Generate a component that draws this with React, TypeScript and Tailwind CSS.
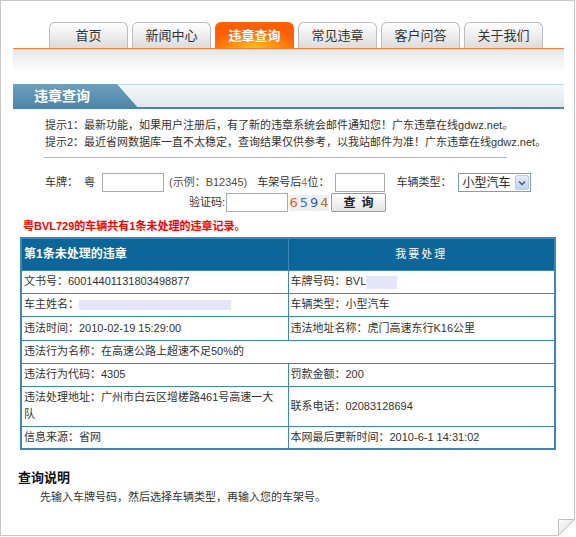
import React from 'react';

const TABS = ['首页', '新闻中心', '违章查询', '常见违章', '客户问答', '关于我们'];
const ACTIVE = '违章查询';

function Tab({ label }: { label: string }) {
  const active = label === ACTIVE;
  return (
    <div
      className={
        active
          ? 'w-[79px] h-[26px] rounded-t-[6px] border border-b-0 border-[#ff6a10] bg-[radial-gradient(ellipse_60%_70%_at_50%_100%,#ffc21c_0%,#ff8a14_55%,#ff5e04_100%)] flex items-center justify-center text-white font-bold text-[13px]'
          : 'w-[79px] h-[26px] rounded-t-[6px] border border-b-0 border-[#bdbdbd] bg-linear-to-b from-white to-[#dcdcdc] flex items-center justify-center text-[#333] text-[13px]'
      }
    >
      {label}
    </div>
  );
}

function Redact({ w, h }: { w: number; h: number }) {
  return <span className="inline-block align-middle bg-[#e6e6fa]" style={{ width: w, height: h }} />;
}

const td = 'border border-[#3b88bb] pl-[2px] align-middle text-[11px] text-[#333] leading-[15px]';

export default function App() {
  return (
    <div className="w-[576px] h-[537px] bg-white relative font-['Liberation_Sans','Noto_Sans_CJK_SC',sans-serif]">
      <div className="w-[575px] h-[536px] border border-[#c8c8c8] overflow-hidden">
        <div className="ml-[12px] w-[551px]">
          {/* nav tabs */}
          <div className="pt-[21px] pl-[36px] flex gap-[4px] items-end">
            {TABS.map((t) => (
              <Tab key={t} label={t} />
            ))}
          </div>
          <div className="h-px bg-[#ff7a30]" />
          <div className="h-[24px] bg-linear-to-b from-[#e6e6e6] to-white" />

          {/* section header */}
          <div className="mt-[11px] h-[25px] relative bg-linear-to-b from-[#f4f7f9] to-[#dfe8ed] border-t border-[#c4dbe7] border-b-2 border-b-[#4d87a7]">
            <div className="absolute left-0 top-[-1px] h-[25px] w-[126px] bg-linear-to-b from-[#6fa0bd] to-[#4c84a6] [clip-path:polygon(0_0,104px_0,126px_100%,0_100%)] flex items-center pl-[21px] text-white font-bold text-[14px]">
              违章查询
            </div>
          </div>

          {/* tips */}
          <div className="mt-[8px] ml-[32px] text-[11px] leading-[17px] text-[#333] whitespace-nowrap">
            <div>提示1：最新功能，如果用户注册后，有了新的违章系统会邮件通知您！广东违章在线gdwz.net。</div>
            <div>提示2：最近省网数据库一直不太稳定，查询结果仅供参考，以我站邮件为准！广东违章在线gdwz.net。</div>
          </div>
          <div className="mt-[6px] ml-[31px] w-[463px] h-px bg-[#b4b4b4]" />

          {/* form */}
          <div className="mt-[15px] h-[19px] flex items-center text-[11px] text-[#333] whitespace-nowrap">
            <span className="ml-[32px]">车牌：</span>
            <span className="ml-[6px]">粤</span>
            <div className="ml-[7px] w-[62px] h-[19px] border border-[#a5acb5] bg-white" />
            <span className="ml-[5px] text-[#5a4a3a]">(示例：B12345)</span>
            <span className="ml-[10px]">
              车架号后<span className="text-[#b8702a]">4</span>位：
            </span>
            <div className="ml-[6px] w-[50px] h-[19px] border border-[#a5acb5] bg-white" />
            <span className="ml-[11px]">车辆类型：</span>
            <div className="ml-[7px] w-[73px] h-[19px] border border-[#7f9db9] bg-white flex items-center">
              <span className="flex-1 pl-[3px] text-[12px] text-[#222]">小型汽车</span>
              <div className="w-[14px] h-[15px] mr-[1px] rounded-[2px] border border-[#b7c9e6] bg-linear-to-b from-[#e5ecfa] to-[#c2d3f2] flex items-center justify-center">
                <svg width="8" height="6" viewBox="0 0 8 6">
                  <path d="M1 1.5 L4 4.5 L7 1.5" fill="none" stroke="#4d6185" strokeWidth="1.6" />
                </svg>
              </div>
            </div>
          </div>
          <div className="mt-[1px] h-[19px] flex items-center text-[11px] text-[#333] whitespace-nowrap">
            <span className="ml-[176px]">验证码:</span>
            <div className="ml-[1px] w-[62px] h-[19px] border border-[#a5acb5] bg-white" />
            <div className="ml-[1px] w-[40px] h-[16px] bg-[#efefef] flex items-center justify-center gap-[2px] text-[13px] font-['DejaVu_Sans',sans-serif]">
              <span className="text-[#e0642e]">6</span>
              <span className="text-[#3a72d4]">5</span>
              <span className="text-[#2a5ac8]">9</span>
              <span className="text-[#b07028]">4</span>
            </div>
            <div className="ml-[2px] w-[55px] h-[19px] border border-[#9a9a9a] rounded-[2px] bg-linear-to-b from-white to-[#e4e4e4] flex items-center justify-center text-[12px] font-bold text-[#222] tracking-[6px] pl-[6px]">
              查询
            </div>
          </div>

          {/* result line */}
          <div className="mt-[6px] ml-[10px] text-[11px] leading-[16px] font-bold text-[#f00] whitespace-nowrap">
            粤BVL729的车辆共有1条未处理的违章记录。
          </div>

          {/* table */}
          <table className="mt-[3px] ml-[7px] w-[536px] border-collapse border-2 border-[#3b88bb] table-fixed">
            <tbody>
              <tr className="h-[32px] bg-[#0d6699]">
                <td className="border border-[#3b88bb] pl-[2px] text-white font-bold text-[12px] w-1/2">第1条未处理的违章</td>
                <td className="border border-[#3b88bb] text-center text-white text-[11px] tracking-[2px] w-1/2">我要处理</td>
              </tr>
              <tr className="h-[23px]">
                <td className={td}>文书号：60014401131803498877</td>
                <td className={td}>
                  车牌号码：BVL<Redact w={31} h={13} />
                </td>
              </tr>
              <tr className="h-[23px]">
                <td className={td}>
                  车主姓名：<Redact w={152} h={10} />
                </td>
                <td className={td}>车辆类型：小型汽车</td>
              </tr>
              <tr className="h-[24px]">
                <td className={td}>违法时间：2010-02-19 15:29:00</td>
                <td className={td}>违法地址名称：虎门高速东行K16公里</td>
              </tr>
              <tr className="h-[23px]">
                <td className={td} colSpan={2}>
                  违法行为名称：在高速公路上超速不足50%的
                </td>
              </tr>
              <tr className="h-[23px]">
                <td className={td}>违法行为代码：4305</td>
                <td className={td}>罚款金额：200</td>
              </tr>
              <tr className="h-[40px]">
                <td className={td + ' leading-[17px]'}>
                  违法处理地址：广州市白云区增槎路461号高速一大
                  <br />队
                </td>
                <td className={td}>联系电话：02083128694</td>
              </tr>
              <tr className="h-[23px]">
                <td className={td}>信息来源：省网</td>
                <td className={td}>本网最后更新时间：2010-6-1 14:31:02</td>
              </tr>
            </tbody>
          </table>

          {/* footer notes */}
          <div className="mt-[20px] ml-[5px] text-[13px] leading-[16px] font-bold text-[#111]">查询说明</div>
          <div className="mt-[3px] ml-[27px] text-[11px] leading-[16px] text-[#333]">
            先输入车牌号码，然后选择车辆类型，再输入您的车架号。
          </div>
        </div>
      </div>

      {/* folded page corner */}
      <svg className="absolute left-[557px] top-[518px]" width="19" height="19" viewBox="0 0 19 19">
        <defs>
          <linearGradient id="fold" x1="0" y1="0" x2="1" y2="1">
            <stop offset="0" stopColor="#ffffff" />
            <stop offset="1" stopColor="#d6d6d6" />
          </linearGradient>
        </defs>
        <rect x="0" y="0" width="19" height="19" fill="#fff" />
        <path d="M1.5 1.5 H17.5 L1.5 17.5 Z" fill="url(#fold)" stroke="#c0c0c0" strokeWidth="1" />
        <path d="M0 17.5 H1.5" stroke="#c8c8c8" strokeWidth="1" />
        <path d="M17.5 0 V1.5" stroke="#c8c8c8" strokeWidth="1" />
      </svg>
    </div>
  );
}
